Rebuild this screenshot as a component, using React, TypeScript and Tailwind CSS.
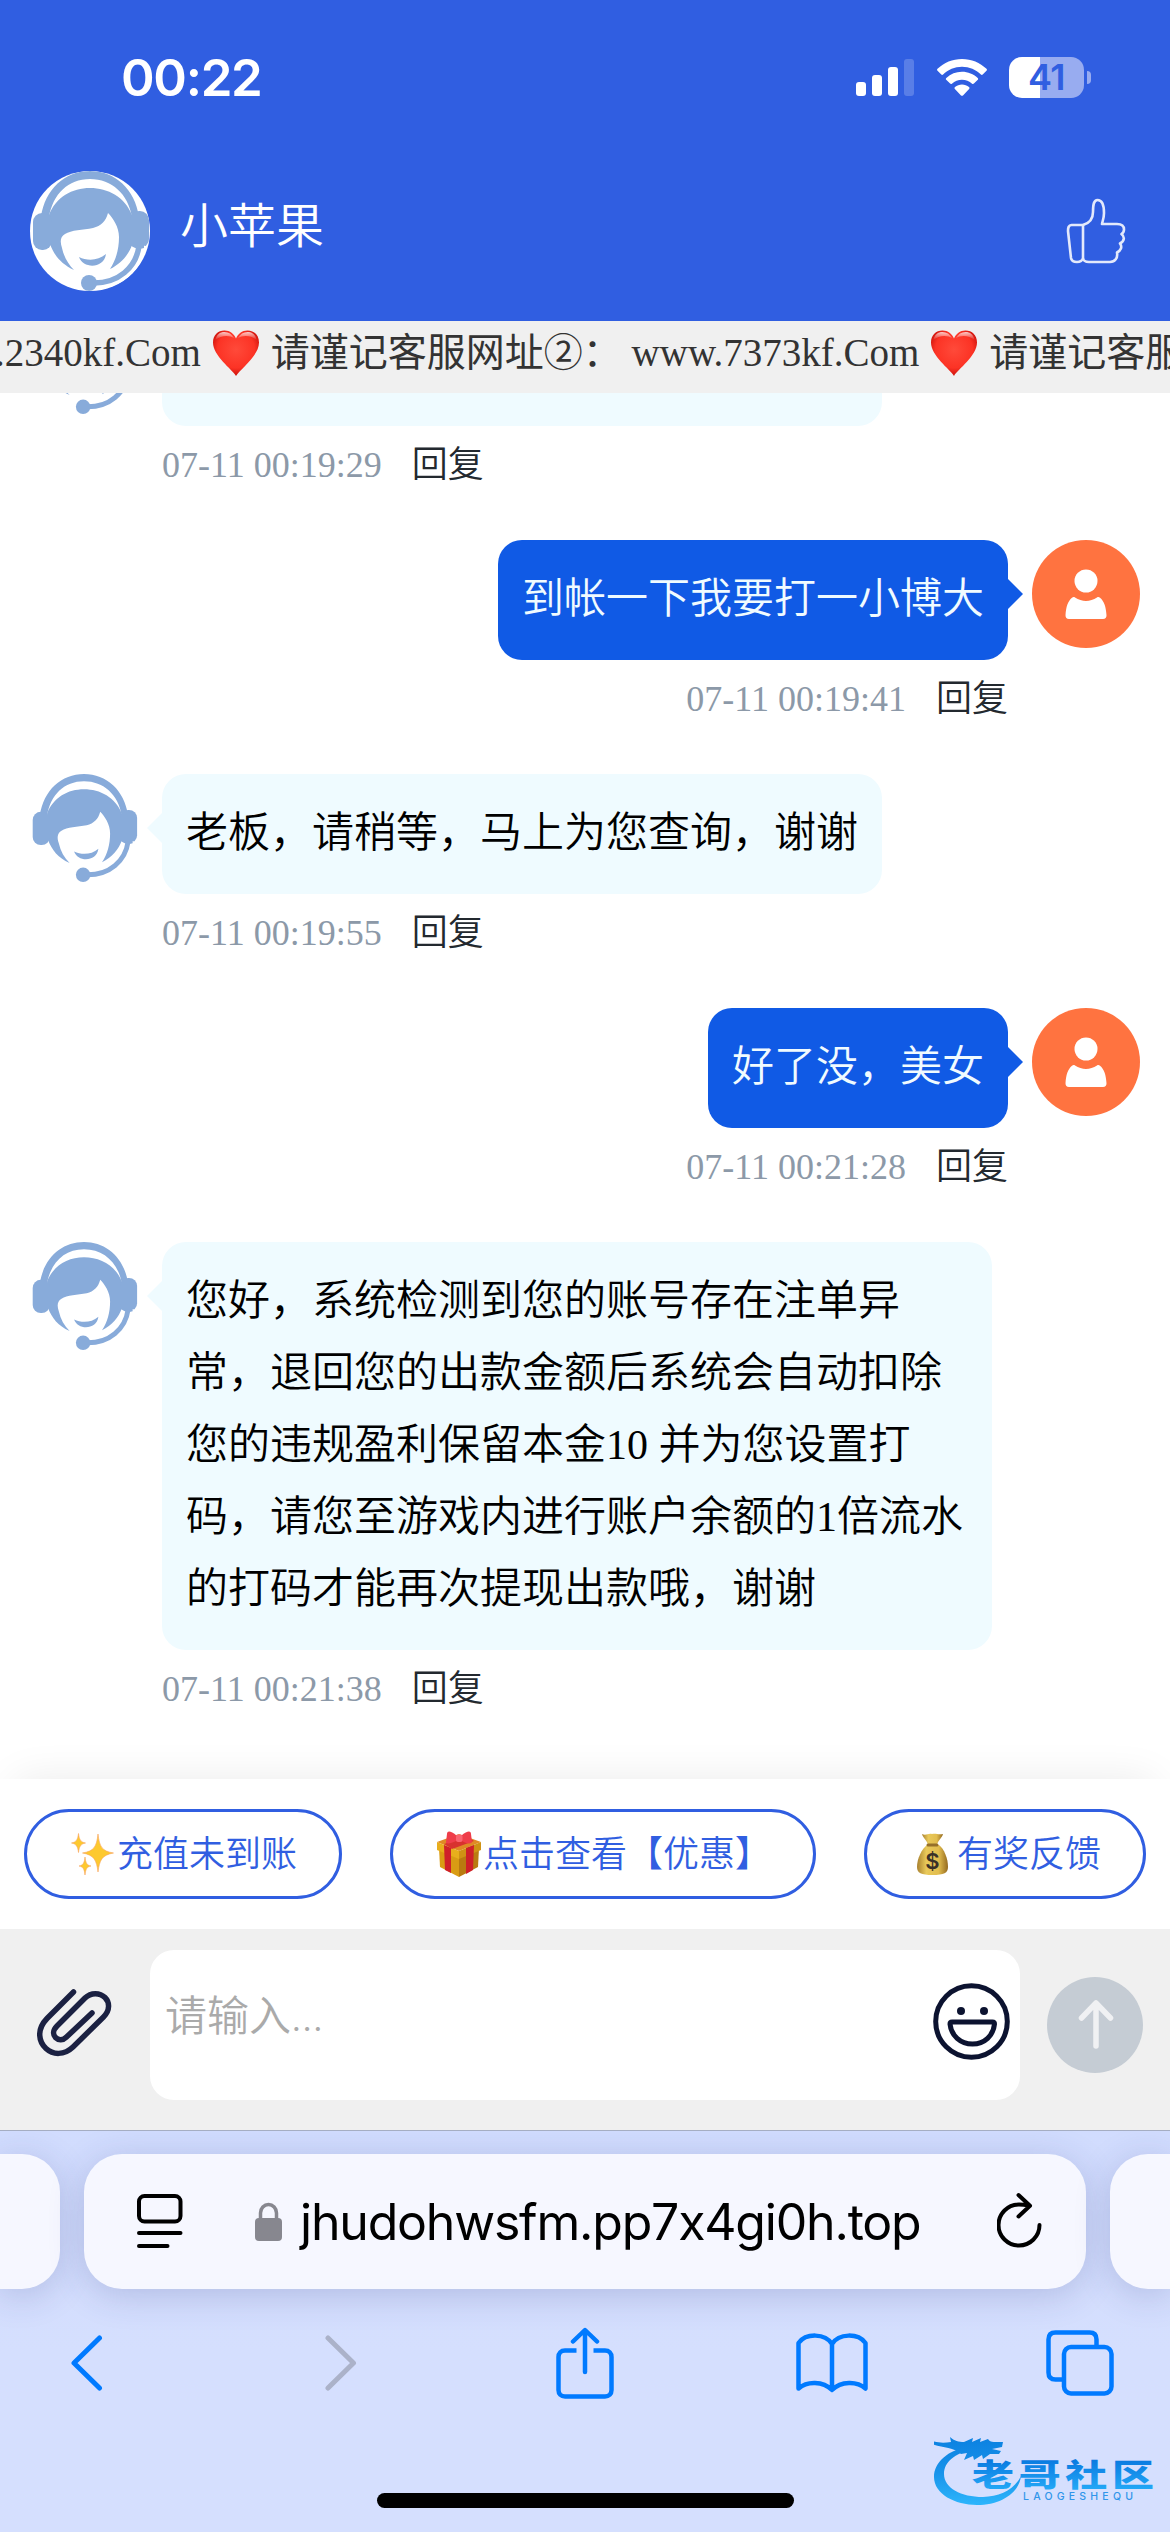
import type { ReactNode } from "react";

type Message = {
  from: "agent" | "user";
  text: string;
  time: string;
};

const messages: Message[] = [
  { from: "agent", text: "老板，请稍等，马上为您查询，谢谢", time: "07-11 00:19:29" },
  { from: "user", text: "到帐一下我要打一小博大", time: "07-11 00:19:41" },
  { from: "agent", text: "老板，请稍等，马上为您查询，谢谢", time: "07-11 00:19:55" },
  { from: "user", text: "好了没，美女", time: "07-11 00:21:28" },
  {
    from: "agent",
    text: "您好，系统检测到您的账号存在注单异常，退回您的出款金额后系统会自动扣除您的违规盈利保留本金10 并为您设置打码，请您至游戏内进行账户余额的1倍流水的打码才能再次提现出款哦，谢谢",
    time: "07-11 00:21:38",
  },
];

const AgentAvatar = ({ className }: { className: string }) => (
  <svg viewBox="0 0 120 120" className={className} fill="#88abda">
    {/* headband */}
    <path d="M11 46C15 18 35 0 60 0s45 18 49 46h-7C98 23 82 8 60 8S23 23 19 46z" />
    {/* hair */}
    <path d="M19 44C26 26 42 17 60 17s35 9 42 27v30c-3 9-11 19-22 24 6-9 9-20 9-32 0-10-6-19-11-24-2 8-7 13-15 15-10 2-22 2-28 6-5 3-5 8-3 14 2 9 6 16 12 22-13-6-20-15-24-26z" />
    <rect x="3" y="42" width="19" height="37" rx="9" />
    <rect x="100" y="40" width="19" height="37" rx="9" />
    <path d="M49 86c8 4 19 4 27-3-2 15-23 15-27 3z" />
    <path d="M64 112c24 0 42-15 46-38" fill="none" stroke="#fff" strokeWidth="12" />
    <path d="M100 70h14v7c-5 2-10 0-14-3z" />
    <path d="M64 112c24 0 42-15 45-37" fill="none" stroke="#88abda" strokeWidth="5.5" />
    <circle cx="59" cy="112" r="8" />
  </svg>
);

const UserAvatar = () => (
  <div className="flex size-27 shrink-0 items-center justify-center rounded-full bg-[#ff7340]">
    <svg viewBox="0 0 42 50" width="42" height="50" fill="#fff">
      <circle cx="21" cy="12" r="11.5" />
      <path d="M10 28.500c7 4.500 15 4.500 22 0 1-.6 2-.5 3 .2 4 3.300 6 9 6.500 17.500.1 2.300-1.200 3.800-3.500 3.800H4c-2.300 0-3.600-1.500-3.500-3.800C1 37.700 3 32 7 28.700c1-.7 2-.8 3-.2z" />
    </svg>
  </div>
);

const StatusBar = () => (
  <div className="flex h-[156px] items-start justify-between pr-[79px] pl-[121px]">
    <span className="mt-[46px] font-['Inter'] text-[51px] leading-[64px] font-semibold tracking-[-1.3px]">
      00:22
    </span>
    <div className="mt-[57px] flex items-start">
      <svg width="58" height="42" viewBox="0 0 58 42" fill="#fff">
        <rect x="0" y="25" width="10" height="14" rx="3" />
        <rect x="16" y="18" width="10" height="21" rx="3" />
        <rect x="32" y="10" width="10" height="29" rx="3" />
        <rect x="48" y="2" width="10" height="37" rx="3" opacity=".2" />
      </svg>
      <svg width="50" height="42" viewBox="0 0 50 42" className="ml-[22.5px]" fill="#fff">
        <path d="M25 2c9.500 0 18 3.700 24.500 9.800.6.600.6 1.300 0 1.900l-3.800 3.800c-.5.500-1.200.5-1.800 0C39 12.700 32.300 9.800 25 9.800S11 12.700 6.100 17.500c-.6.500-1.300.5-1.800 0L.5 13.700c-.6-.6-.6-1.300 0-1.900C7 5.700 15.500 2 25 2z" />
        <path d="M25 14.800c6 0 11.500 2.300 15.700 6.100.6.600.6 1.300.1 1.900l-3.900 3.800c-.5.600-1.200.6-1.800.1a15 15 0 0 0-20.200 0c-.6.500-1.300.5-1.800-.1l-3.900-3.800c-.5-.6-.5-1.300.1-1.900A23 23 0 0 1 25 14.800z" />
        <path d="M25 27.500c2.600 0 5 .9 7 2.500.6.500.7 1.300.1 1.900L26 38.400c-.6.600-1.400.6-2 0l-6.100-6.500c-.6-.6-.5-1.400.1-1.900 2-1.600 4.400-2.500 7-2.500z" />
      </svg>
      <div className="ml-[22.500px] flex h-[41px] w-[75px] items-center justify-center rounded-[13px] bg-[linear-gradient(90deg,#fff_31px,#98acf0_31px)]">
        <span className="font-['Inter'] text-[36px] leading-[41px] font-semibold tracking-[-0.5px] text-[#305ee1]">
          41
        </span>
      </div>
      <div className="mt-[14px] ml-[3px] h-[13px] w-1 rounded-r-full bg-[#98acf0]" />
    </div>
  </div>
);

const ThumbIcon = () => (
  <svg width="60" height="66" viewBox="0 0 60 66" fill="none" stroke="#e3e9fb" strokeWidth="2.600" strokeLinejoin="round">
    <path d="M17 27H5.500C2.500 27 2 30 2 33l3 27c.5 3.500 3 4 6 4s6-1.500 6-4z" />
    <path d="M17 27c7-2 10-7 10-13 0-8 1-12 4.500-12 5 0 6.500 7 6.500 13 0 5-1.500 8-2 11h15c5 0 7 2 7 5.500 0 2.500-1 3.500-2.500 4.500 3.500 3 3 7-1.500 9.500 2.500 3.500 1 7-3 9 1 5.500-2 9.500-7 9.500H23c-4 0-6-2-6-4" />
  </svg>
);

const Header = () => (
  <header className="h-[321px] bg-[#305ee1] text-white">
    <StatusBar />
    <div className="flex items-center pr-11 pl-[30px] pt-[15px]">
      <div className="size-30 overflow-hidden rounded-full bg-white">
        <AgentAvatar className="size-30" />
      </div>
      <h1 className="-mt-2 ml-[30px] text-[48px] leading-[60px] font-[350]">小苹果</h1>
      <div className="ml-auto">
        <ThumbIcon />
      </div>
    </div>
  </header>
);

const Heart = () => (
  <svg width="48" height="48" viewBox="0 0 48 48" className="mx-[11px] -mt-px shrink-0">
    <defs>
      <radialGradient id="heart" cx=".5" cy=".42" r=".62">
        <stop offset="0" stopColor="#ff4a3a" />
        <stop offset=".65" stopColor="#fc3325" />
        <stop offset="1" stopColor="#c00a05" />
      </radialGradient>
      <linearGradient id="shine" x1="0" y1="0" x2="0" y2="1">
        <stop offset="0" stopColor="#fff" stopOpacity=".75" />
        <stop offset="1" stopColor="#fff" stopOpacity="0" />
      </linearGradient>
    </defs>
    <path
      d="M24 47C20 40 1 27 1 13.500 1 6 6 1.500 12.500 1.500 18 1.500 22 5 24 9.500 26 5 30 1.500 35.500 1.500 42 1.500 47 6 47 13.500 47 27 28 40 24 47z"
      fill="url(#heart)"
    />
    <path d="M3.500 11C4.500 5.500 8 3 12.500 3c4 0 7.500 2 9.500 6-5-3-13-3-18.500 2zM44.500 11C43.500 5.500 40 3 35.500 3c-4 0-7.500 2-9.500 6 5-3 13-3 18.500 2z" fill="url(#shine)" />
  </svg>
);

const Marquee = () => (
  <div className="flex h-[72px] items-center overflow-hidden bg-[#f0f0f0] pb-2 text-[39px] leading-[64px] whitespace-pre text-[#333]">
    <span className="-ml-[87px]">www.2340kf.Com</span>
    <Heart />
    <span>请谨记客服网址②： www.7373kf.Com</span>
    <Heart />
    <span>请谨记客服网址①：</span>
  </div>
);

const MessageRow = ({ message }: { message: Message }) => {
  const isUser = message.from === "user";
  return (
    <div className={isUser ? "flex flex-row-reverse pr-[30px] pb-[49px]" : "flex pl-[30px] pb-[49px]"}>
      {isUser ? <UserAvatar /> : <AgentAvatar className="size-27 shrink-0" />}
      <div className={isUser ? "mr-6 flex flex-col items-end" : "ml-6 flex flex-col items-start"}>
        <div
          className={
            isUser
              ? "relative max-w-[830px] rounded-3xl bg-[#105ae5] px-6 pt-[23px] pb-[25px] text-[42px] leading-[72px] font-[350] text-[#f0fbff]"
              : "relative max-w-[830px] rounded-3xl bg-[#effbff] px-6 pt-[23px] pb-[25px] text-[42px] leading-[72px] font-[350] text-black"
          }
        >
          <p>{message.text}</p>
          <i
            className={
              isUser
                ? "absolute top-[39px] -right-[15px] border-y-[15px] border-l-[15px] border-y-transparent border-l-[#105ae5]"
                : "absolute top-[39px] -left-[15px] border-y-[15px] border-r-[15px] border-y-transparent border-r-[#effbff]"
            }
          />
        </div>
        <div className="mt-[14px] flex h-[51px] items-center gap-[30px] text-[36px] leading-[51px] text-[#8c99a8]">
          <span>{message.time}</span>
          <span className="font-[350] text-[#23292f]">回复</span>
        </div>
      </div>
    </div>
  );
};

const SparklesIcon = () => (
  <svg width="48" height="48" viewBox="0 0 48 48" fill="#fdc92f" stroke="#f8a25c" strokeWidth=".6">
    <path d="M29 4c1.500 13 4 17 15.500 19-11.500 2-14 7-15.500 19-1.500-12-4-17-15.500-19 11.500-2 14-6 15.500-19z" />
    <path d="M9.500 3.500c.8 6 2 8.500 7 9.500-5 1-6.200 3.500-7 9.500-.8-6-2-8.500-7-9.500 5-1 6.200-3.500 7-9.500z" />
    <path d="M16 27c.7 6 1.800 8.200 6 9-4.200.8-5.300 3-6 9-.7-6-1.800-8.200-6-9 4.200-.8 5.300-3 6-9z" />
  </svg>
);

const GiftIcon = () => (
  <svg width="48" height="48" viewBox="0 0 48 48">
    <path d="M2 12L24 4l22 8-22 9z" fill="#e08a25" />
    <path d="M4 18l20 8v21L5 37z" fill="#d99c14" />
    <path d="M44 18l-20 8v21l19-10z" fill="#b97b10" />
    <path d="M2 12l22 9v8L2 20z" fill="#e8ae1c" />
    <path d="M46 12l-22 9v8l22-9z" fill="#cf9214" />
    <path d="M9 15l7 3v25l-6-3zM31 18l8-3-1 25-7 4z" fill="#cf2029" />
    <path d="M9 14L31 6l8 5-22 8z" fill="#d8322f" />
    <path d="M12 4c0-3 3-4 10 2h4c7-6 10-5 10-2l1 8c0 2-6 2-10-1h-6c-5 3-11 3-10 1z" fill="#ef3d49" />
    <rect x="21" y="4.500" width="6.500" height="7.500" rx="2" fill="#f96470" />
  </svg>
);

const MoneyBagIcon = () => (
  <svg width="48" height="48" viewBox="0 0 48 48">
    <defs>
      <linearGradient id="bag" x1="0" y1="0" x2="1" y2="0">
        <stop offset="0" stopColor="#a9812f" />
        <stop offset=".3" stopColor="#e9c95a" />
        <stop offset=".7" stopColor="#e2bd4e" />
        <stop offset="1" stopColor="#94691f" />
      </linearGradient>
    </defs>
    <path d="M13 4c4 2 6-1 10 0 4-1 6 1 11 0-1 4-5 6-6 11h-9c-1-5-5-7-6-11z" fill="url(#bag)" />
    <path d="M18 15h12c5 4 9 13 9 22 0 6-4 8-15.500 8S8 43 8 37c0-9 5-18 10-22z" fill="url(#bag)" />
    <rect x="17.500" y="13.500" width="12" height="3" rx="1.500" fill="#96702a" />
    <text x="23.500" y="39" textAnchor="middle" fontFamily="Inter" fontWeight="600" fontSize="22" fill="#3a3128">
      $
    </text>
  </svg>
);

const QuickButton = ({ icon, children }: { icon: ReactNode; children: string }) => (
  <button className="flex h-[90px] shrink-0 items-center rounded-full border-3 border-[#305ee1] bg-white px-[42px] text-[36px] font-[350] whitespace-nowrap text-[#305ee1]">
    {icon}
    <span className="mt-0.5">{children}</span>
  </button>
);

const QuickBar = () => (
  <div className="relative flex h-[150px] items-center gap-12 bg-white px-6 shadow-[0_-14px_44px_-16px_rgba(0,0,0,0.09)]">
    <QuickButton icon={<SparklesIcon />}>充值未到账</QuickButton>
    <QuickButton icon={<GiftIcon />}>点击查看【优惠】</QuickButton>
    <QuickButton icon={<MoneyBagIcon />}>有奖反馈</QuickButton>
  </div>
);

const InputBar = () => (
  <div className="relative flex h-[201px] items-center bg-[#f0f0f0] pb-[9px] pl-[37px]">
    <svg width="76" height="76" viewBox="0 0 76 76" fill="none" stroke="#1b2142" strokeWidth="5.500" strokeLinecap="round">
      <path d="M36.500 5L10 31.500C-1 43 2 55 9 61.500s18 7 27-1.500L66.500 30c7-7 6-15 1.500-19.500-5-5-14-5.500-20 .5L20 39c-4.500 4.500-4 9-1.500 11.500 3 3 7.500 3 11-.5L55 26" />
    </svg>
    <div className="ml-[37px] flex h-[150px] w-[870px] items-center rounded-3xl bg-white pr-[10px] pl-[15px]">
      <span className="-mt-4 text-[42px] font-[350] text-[#aaa]">
        请输入<span className="font-['Inter'] text-[38px]">...</span>
      </span>
      <svg width="77" height="77" viewBox="0 0 77 77" className="-mt-[7px] ml-auto" fill="none" stroke="#0c1330" strokeWidth="5">
        <circle cx="38.500" cy="38.500" r="35.800" />
        <path d="M19 39h40.500c1.500 0 2 .8 2 2-1 11.500-10 20-22 20S18 52.500 17 41c0-1.200.5-2 2-2z" />
        <circle cx="28" cy="28" r="4" fill="#0c1330" stroke="none" />
        <circle cx="51" cy="28" r="4" fill="#0c1330" stroke="none" />
      </svg>
    </div>
    <svg width="96" height="96" viewBox="0 0 96 96" className="ml-[27px]">
      <circle cx="48" cy="48" r="48" fill="#c5ccd4" />
      <path d="M49 69V27M34.500 41L49 26l14.500 15" fill="none" stroke="#f0f1f3" strokeWidth="5.500" strokeLinecap="round" strokeLinejoin="round" />
    </svg>
  </div>
);

const AddressBar = () => (
  <div className="flex justify-between pt-[23px]">
    <div className="h-[135px] w-[60px] rounded-r-[38px] bg-[#f6f7ff] shadow-[0_6px_36px_rgba(40,50,120,0.2)]" />
    <div className="flex h-[135px] w-[1002px] items-center rounded-[38px] bg-[#f6f7ff] shadow-[0_6px_36px_rgba(40,50,120,0.2)]">
      <svg width="46" height="55" viewBox="0 0 46 55" className="ml-[53px]" fill="none" stroke="#000" strokeWidth="4" strokeLinecap="round">
        <rect x="2" y="2" width="41.500" height="25.500" rx="5.500" />
        <path d="M2 39h41.500M2 52h28.500" />
      </svg>
      <svg width="27" height="39" viewBox="0 0 27 39" className="ml-[72px]">
        <path d="M5.500 19v-8a8 8.500 0 0 1 16 0v8" fill="none" stroke="#87878f" strokeWidth="3.500" />
        <rect y="16" width="27" height="23" rx="4" fill="#87878f" />
      </svg>
      <span className="mt-px ml-[18px] w-[620px] font-['Inter'] text-[50px] leading-[64px] tracking-[-1.2px] whitespace-nowrap text-black">
        jhudohwsfm.pp7x4gi0h.top
      </span>
      <svg width="46" height="56" viewBox="0 0 46 56" className="-mt-1 ml-[77px]" fill="none" stroke="#000" strokeWidth="4" strokeLinecap="round" strokeLinejoin="round">
        <path d="M42.500 33A20.500 20.500 0 1 1 22 12.500c4 0 7 .5 10 1M21.500 3L33 13.800 21.500 24.500" />
      </svg>
    </div>
    <div className="h-[135px] w-[60px] rounded-l-[38px] bg-[#f6f7ff] shadow-[0_6px_36px_rgba(40,50,120,0.2)]" />
  </div>
);

const Toolbar = () => (
  <div className="mt-[37px] flex h-[74px] items-center pl-[70px]">
    <svg width="34" height="56" viewBox="0 0 34 56" fill="none" stroke="#007aff" strokeWidth="5" strokeLinecap="round" strokeLinejoin="round">
      <path d="M29.500 3L4 28l25.500 25" />
    </svg>
    <svg width="34" height="56" viewBox="0 0 34 56" className="ml-[220px]" fill="none" stroke="#abb2c9" strokeWidth="5" strokeLinecap="round" strokeLinejoin="round">
      <path d="M4 3l25.500 25L4 53" />
    </svg>
    <svg width="58" height="72" viewBox="0 0 58 72" className="ml-[198px]" fill="none" stroke="#007aff" strokeWidth="4.500">
      <path d="M20.500 23.500H9c-4 0-6.500 2.500-6.500 6.500v33c0 4 2.500 6.500 6.500 6.500h40c4 0 6.500-2.500 6.500-6.500V30c0-4-2.500-6.500-6.500-6.500H37.500" />
      <path d="M29 45V4M17 14.500L29 3l12 11.500" strokeLinecap="round" strokeLinejoin="round" />
    </svg>
    <svg width="72" height="60" viewBox="0 0 72 60" className="ml-[182px]" fill="none" stroke="#007aff" strokeWidth="4.500" strokeLinejoin="round">
      <path d="M36 11C29 0 10 0 2.500 10v45.500C11 48 27 48 36 57c9-9 25-9 33.500-1.500V10C62 0 43 0 36 11zM36 11v45" />
    </svg>
    <svg width="68" height="66" viewBox="0 0 68 66" className="ml-[178px]" fill="none" stroke="#007aff" strokeWidth="4.500">
      <path d="M16 49.500H9.500c-4.500 0-7-2.500-7-7v-33c0-4.500 2.500-7 7-7h34c4.500 0 7 2.500 7 7V15" />
      <rect x="18" y="17" width="47.500" height="46.500" rx="7" />
    </svg>
  </div>
);

const Watermark = () => (
  <svg width="236" height="84" viewBox="0 0 236 84" className="absolute right-0 bottom-[22px]">
    <defs>
      <linearGradient id="wm" gradientUnits="userSpaceOnUse" x1="0" y1="8" x2="0" y2="78">
        <stop offset="0" stopColor="#0a7fe0" />
        <stop offset=".55" stopColor="#1893ea" />
        <stop offset="1" stopColor="#2cb4fb" />
      </linearGradient>
      <linearGradient id="wmText" x1="0" y1="0" x2="0" y2="1">
        <stop offset=".2" stopColor="#0a7ae0" />
        <stop offset="1" stopColor="#27b0fb" />
      </linearGradient>
    </defs>
    {/* dragon ring */}
    <path d="M36 20C14 24 0 36 0 51c0 17 21 28 43 28 24 0 42-12 44-29-6 13-21 21-38 21-22 0-39-9-39-23 0-12 11-21 28-24z" fill="url(#wm)" />
    {/* dragon head */}
    <path d="M-2 15c7 2 12 2 19 1l-1-5c4 4 9 5 14 5 3-1 6-3 9-4l-1 4 9-4-1 4 8-3c1 2 3 3 6 3l9 0-1 5-10 2 9 2-2 3-9 0-7 5-1-4-8 5-1-4-9 4 3-7-6 1c-7-7-20-6-29-10z" fill="url(#wm)" />
    <g transform="scale(1 .72)">
      <text x="38" y="83" fontFamily="Noto Sans CJK SC" fontWeight="900" fontSize="42" letterSpacing="4.700" fill="url(#wmText)">
        老哥社区
      </text>
    </g>
    <text x="89" y="74" fontFamily="Inter" fontWeight="500" fontSize="10.500" textLength="110" fill="#2f95ea">
      LAOGESHEQU
    </text>
  </svg>
);

const BrowserBar = () => (
  <footer className="relative h-[402px] overflow-hidden border-t border-[#a5adc2] bg-[linear-gradient(180deg,#d1dcfe_0,#d5dffe_220px)]">
    <AddressBar />
    <Toolbar />
    <div className="mx-auto mt-[93px] h-[15px] w-[417px] rounded-full bg-black" />
    <Watermark />
  </footer>
);

const App = () => {
  return (
    <div className="flex h-[2532px] w-[1170px] flex-col overflow-hidden bg-white font-['Liberation_Serif','Noto_Sans_CJK_SC',serif]">
      <Header />
      <Marquee />
      <main className="flex h-[1386px] flex-col overflow-hidden bg-white">
        {/* scrolled: the first message is partly under the marquee */}
        <div className="-mt-[87px]">
          {messages.map((message) => (
            <MessageRow key={message.time} message={message} />
          ))}
        </div>
      </main>
      <QuickBar />
      <InputBar />
      <BrowserBar />
    </div>
  );
};

export default App;
